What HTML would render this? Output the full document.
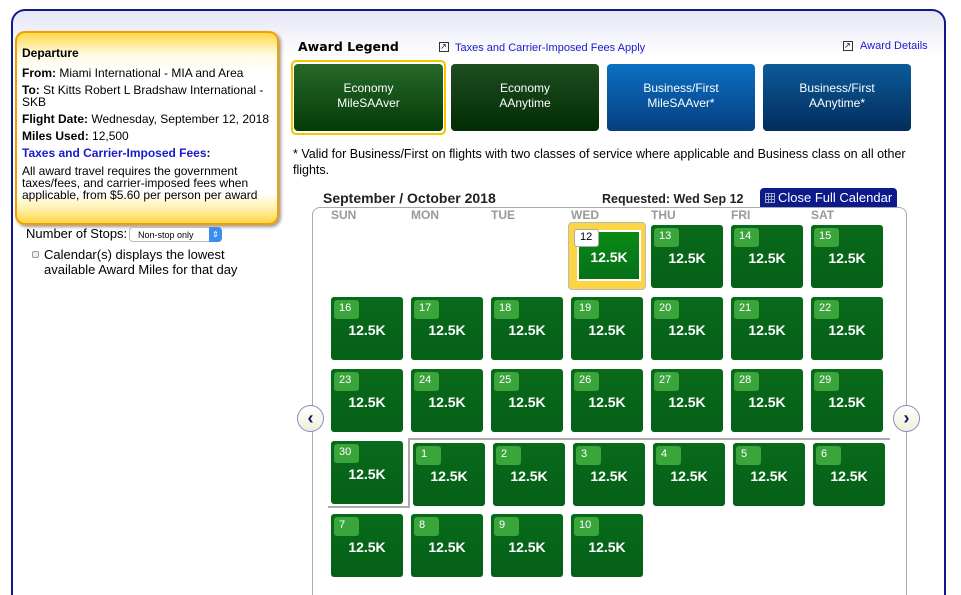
<!DOCTYPE html>
<html style="height:595px;overflow:hidden"><head><meta charset="utf-8"><style>
*{margin:0;padding:0;box-sizing:border-box}
body{width:961px;height:595px;overflow:hidden;background:#fff;font-family:"Liberation Sans",Arial,sans-serif;position:relative;color:#000}
.a{position:absolute}
#outer{left:11px;top:9px;width:935px;height:586px;border:2px solid #0c1a8c;border-bottom:0;border-radius:14px 14px 0 0;background:linear-gradient(#e6e6f6,#fff 45px)}
#dep{left:15px;top:31px;width:264px;height:194px;border:2px solid #f2a000;border-radius:10px;background:linear-gradient(#ffd84a 0,#fffbe6 22px,#fff 40px,#fff 160px,#fff2b0 175px,#ffd23a 192px);box-shadow:2px 2px 3px #999;font-size:12px;line-height:12px;padding:14px 0 0 5px}
#dep p{margin-bottom:5px}
.btn{top:64px;height:67px;border-radius:4px;color:#fff;font-size:12px;text-align:center;line-height:15px;padding-top:17px}
.g{background:linear-gradient(#27692a,#043b07)}
.bl{background:linear-gradient(#0b70c4,#053f7e)}
.bd{background:linear-gradient(#0c5a9a,#032d5c)}
.c{width:72px;height:63px;border-radius:3px;background:linear-gradient(#086a1a,#056018);color:#fff}
.c b{position:absolute;left:0;right:0;top:25px;text-align:center;font-size:14px}
.c i{position:absolute;left:3px;top:3px;width:25px;height:19px;border-radius:3px;background:#3aa53a;font-style:normal;font-size:11px;padding:2px 0 0 5px}
.dh{top:208px;font-size:12px;font-weight:bold;color:#999}
.arr{width:27px;height:27px;border-radius:50%;border:1px solid #8a8ac8;background:linear-gradient(#fff,#f1efd8);color:#0c1a6c;font-weight:bold;font-size:18px;text-align:center;line-height:24px}
</style></head><body>
<div id="outer" class="a"></div>
<div id="dep" class="a">
<p style="font-weight:bold;margin-bottom:8px">Departure</p>
<p><b>From:</b> Miami International - MIA and Area</p>
<p><b>To:</b> St Kitts Robert L Bradshaw International -<br>SKB</p>
<p><b>Flight Date:</b> Wednesday, September 12, 2018</p>
<p><b>Miles Used:</b> 12,500</p>
<p style="color:#1a1acc;font-weight:bold;margin-bottom:6px">Taxes and Carrier-Imposed Fees<span style="color:#000">:</span></p>
<p style="line-height:12px">All award travel requires the government taxes/fees, and carrier-imposed fees when applicable, from $5.60 per person per award</p>
</div>
<div class="a" style="left:26px;top:226px;font-size:13px">Number of Stops:</div>
<div class="a" style="left:129px;top:227px;width:93px;height:15px;border:1px solid #bbb;border-radius:4px;font-size:9px;padding:2px 0 0 8px;background:#fff">Non-stop only</div>
<div class="a" style="left:209px;top:227px;width:13px;height:15px;background:#3b8ef0;border-radius:0 4px 4px 0;color:#fff;font-size:8px;text-align:center;line-height:15px">⇕</div>
<div class="a" style="left:32px;top:251px;width:7px;height:7px;border:1px solid #999;border-radius:2px;background:#eee"></div>
<div class="a" style="left:44px;top:247px;font-size:13px;line-height:15px">Calendar(s) displays the lowest<br>available Award Miles for that day</div>

<div class="a" style="left:298px;top:39px;font-weight:bold;font-family:'DejaVu Sans',sans-serif;font-size:12.5px">Award Legend</div>
<div class="a" style="left:439px;top:42px;width:10px;height:10px;border:1px solid #333;font-size:8px;line-height:8px">↗</div>
<div class="a" style="left:455px;top:42px;font-size:11px;color:#1a1acc">Taxes and Carrier-Imposed Fees Apply</div>
<div class="a" style="left:843px;top:41px;width:10px;height:10px;border:1px solid #333;font-size:8px;line-height:8px">↗</div>
<div class="a" style="left:860px;top:40px;font-size:11px;color:#1a1acc">Award Details</div>
<div class="a" style="left:291px;top:60px;width:155px;height:75px;border:2px solid #f7c400;border-radius:5px"></div>
<div class="a btn g" style="left:294px;width:149px">Economy<br>MileSAAver</div>
<div class="a btn g" style="left:451px;width:148px;background:linear-gradient(#1e4e21,#022c04)">Economy<br>AAnytime</div>
<div class="a btn bl" style="left:607px;width:148px">Business/First<br>MileSAAver*</div>
<div class="a btn bd" style="left:763px;width:148px">Business/First<br>AAnytime*</div>
<div class="a" style="left:293px;top:146px;font-size:12.5px;line-height:16px;width:645px">* Valid for Business/First on flights with two classes of service where applicable and Business class on all other flights.</div>

<div class="a" style="left:323px;top:190px;font-size:14px;font-weight:bold;color:#222">September / October 2018</div>
<div class="a" style="left:602px;top:192px;font-size:12.5px;font-weight:bold;color:#222">Requested: Wed Sep 12</div>
<div class="a" style="left:760px;top:188px;width:137px;height:20px;background:#0c1a8c;border-radius:4px 4px 0 0;color:#fff;font-size:13px;padding:2px 0 0 18px;white-space:nowrap;overflow:hidden">Close Full Calendar</div>
<div class="a" style="left:765px;top:193px;width:10px;height:10px;border:1px solid #9ab;background:repeating-linear-gradient(90deg,transparent 0 2px,#9ab 2px 3px),repeating-linear-gradient(0deg,#0c1a8c 0 2px,#9ab 2px 3px)"></div>
<div class="a" style="left:312px;top:207px;width:595px;height:388px;border:1.5px solid #aaa;border-bottom:0;border-radius:8px 8px 0 0;background:#fff"></div>
<div class="a dh" style="left:331px">SUN</div><div class="a dh" style="left:411px">MON</div><div class="a dh" style="left:491px">TUE</div><div class="a dh" style="left:571px">WED</div><div class="a dh" style="left:651px">THU</div><div class="a dh" style="left:731px">FRI</div><div class="a dh" style="left:811px">SAT</div>

<div class="a" style="left:568px;top:222px;width:78px;height:68px;background:#fdd544;border:1px solid #bbb;border-radius:4px"></div>
<div class="a" style="left:577px;top:230px;width:64px;height:51px;border:2px solid #fff;background:linear-gradient(#0a8a14,#067018);color:#fff"><b style="position:absolute;left:0;right:0;top:17px;text-align:center;font-size:14px">12.5K</b></div>
<div class="a" style="left:574px;top:229px;width:25px;height:18px;background:#fff;border:1px solid #aaa;border-radius:3px;font-size:11px;padding:1px 0 0 5px">12</div>

<div class="a c" style="left:651px;top:225px"><i>13</i><b>12.5K</b></div>
<div class="a c" style="left:731px;top:225px"><i>14</i><b>12.5K</b></div>
<div class="a c" style="left:811px;top:225px"><i>15</i><b>12.5K</b></div>

<div class="a c" style="left:331px;top:297px"><i>16</i><b>12.5K</b></div>
<div class="a c" style="left:411px;top:297px"><i>17</i><b>12.5K</b></div>
<div class="a c" style="left:491px;top:297px"><i>18</i><b>12.5K</b></div>
<div class="a c" style="left:571px;top:297px"><i>19</i><b>12.5K</b></div>
<div class="a c" style="left:651px;top:297px"><i>20</i><b>12.5K</b></div>
<div class="a c" style="left:731px;top:297px"><i>21</i><b>12.5K</b></div>
<div class="a c" style="left:811px;top:297px"><i>22</i><b>12.5K</b></div>

<div class="a c" style="left:331px;top:369px"><i>23</i><b>12.5K</b></div>
<div class="a c" style="left:411px;top:369px"><i>24</i><b>12.5K</b></div>
<div class="a c" style="left:491px;top:369px"><i>25</i><b>12.5K</b></div>
<div class="a c" style="left:571px;top:369px"><i>26</i><b>12.5K</b></div>
<div class="a c" style="left:651px;top:369px"><i>27</i><b>12.5K</b></div>
<div class="a c" style="left:731px;top:369px"><i>28</i><b>12.5K</b></div>
<div class="a c" style="left:811px;top:369px"><i>29</i><b>12.5K</b></div>

<div class="a" style="left:328px;top:506px;width:82px;height:2px;background:#aaa"></div>
<div class="a" style="left:408px;top:438px;width:2px;height:70px;background:#aaa"></div>
<div class="a" style="left:408px;top:438px;width:482px;height:2px;background:#aaa"></div>

<div class="a c" style="left:331px;top:441px"><i>30</i><b>12.5K</b></div>
<div class="a c" style="left:413px;top:443px"><i>1</i><b>12.5K</b></div>
<div class="a c" style="left:493px;top:443px"><i>2</i><b>12.5K</b></div>
<div class="a c" style="left:573px;top:443px"><i>3</i><b>12.5K</b></div>
<div class="a c" style="left:653px;top:443px"><i>4</i><b>12.5K</b></div>
<div class="a c" style="left:733px;top:443px"><i>5</i><b>12.5K</b></div>
<div class="a c" style="left:813px;top:443px"><i>6</i><b>12.5K</b></div>

<div class="a c" style="left:331px;top:514px"><i>7</i><b>12.5K</b></div>
<div class="a c" style="left:411px;top:514px"><i>8</i><b>12.5K</b></div>
<div class="a c" style="left:491px;top:514px"><i>9</i><b>12.5K</b></div>
<div class="a c" style="left:571px;top:514px"><i>10</i><b>12.5K</b></div>

<div class="a arr" style="left:297px;top:405px">‹</div>
<div class="a arr" style="left:893px;top:405px">›</div>
</body></html>
